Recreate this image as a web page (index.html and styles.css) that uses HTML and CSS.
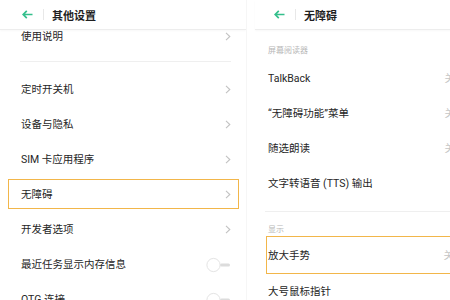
FILE: index.html
```html
<!DOCTYPE html>
<html lang="zh-CN">
    <head>
        <meta charset="UTF-8">
        <meta name="viewport" content="width=device-width, initial-scale=1.0">
        <title>其他设置 / 无障碍</title>
        <link rel="stylesheet" href="styles.css">
    </head>
    <body>
        <div class="screens">
            <section class="panel panel-left">
                <header class="bar">
                    <svg class="back" width="11" height="9" viewBox="0 0 11 9"><path d="M10.5 4.5H1.2M4.8 0.9L1.2 4.5l3.6 3.6" fill="none" stroke="#34bf8c" stroke-width="1.7"/></svg>
                    <span class="bar-sep"></span>
                    <h1 class="bar-title">其他设置</h1>
                </header>
                <div class="row row-cut">
                    <span>使用说明</span>
                    <svg class="chev" width="6" height="9" viewBox="0 0 6 9"><path d="M1 0.8l3.8 3.7L1 8.2" fill="none" stroke="#c2c2c2" stroke-width="1.1"/></svg>
                </div>
                <div class="divider"></div>
                <div class="row">
                    <span>定时开关机</span>
                    <svg class="chev" width="6" height="9" viewBox="0 0 6 9"><path d="M1 0.8l3.8 3.7L1 8.2" fill="none" stroke="#c2c2c2" stroke-width="1.1"/></svg>
                </div>
                <div class="row">
                    <span>设备与隐私</span>
                    <svg class="chev" width="6" height="9" viewBox="0 0 6 9"><path d="M1 0.8l3.8 3.7L1 8.2" fill="none" stroke="#c2c2c2" stroke-width="1.1"/></svg>
                </div>
                <div class="row">
                    <span>SIM 卡应用程序</span>
                    <svg class="chev" width="6" height="9" viewBox="0 0 6 9"><path d="M1 0.8l3.8 3.7L1 8.2" fill="none" stroke="#c2c2c2" stroke-width="1.1"/></svg>
                </div>
                <div class="row row-focus">
                    <span>无障碍</span>
                    <svg class="chev" width="6" height="9" viewBox="0 0 6 9"><path d="M1 0.8l3.8 3.7L1 8.2" fill="none" stroke="#c2c2c2" stroke-width="1.1"/></svg>
                </div>
                <div class="row">
                    <span>开发者选项</span>
                    <svg class="chev" width="6" height="9" viewBox="0 0 6 9"><path d="M1 0.8l3.8 3.7L1 8.2" fill="none" stroke="#c2c2c2" stroke-width="1.1"/></svg>
                </div>
                <div class="row">
                    <span>最近任务显示内存信息</span>
                    <svg class="toggle" width="27" height="16" viewBox="0 0 27 16"><rect x="14" y="6.5" width="10" height="3" rx="1.5" fill="#dcdcdc"/><circle cx="7.5" cy="8" r="6.6" fill="#fff" stroke="#e4e4e4" stroke-width="1"/></svg>
                </div>
                <div class="row">
                    <span>OTG 连接</span>
                    <svg class="toggle" width="27" height="16" viewBox="0 0 27 16"><rect x="14" y="6.5" width="10" height="3" rx="1.5" fill="#dcdcdc"/><circle cx="7.5" cy="8" r="6.6" fill="#fff" stroke="#e4e4e4" stroke-width="1"/></svg>
                </div>
            </section>

            <section class="panel panel-right">
                <header class="bar">
                    <svg class="back" width="11" height="9" viewBox="0 0 11 9"><path d="M10.5 4.5H1.2M4.8 0.9L1.2 4.5l3.6 3.6" fill="none" stroke="#34bf8c" stroke-width="1.7"/></svg>
                    <span class="bar-sep"></span>
                    <h1 class="bar-title">无障碍</h1>
                </header>
                <div class="group-label">屏幕阅读器</div>
                <div class="row">
                    <span>TalkBack</span>
                    <span class="value">关</span>
                </div>
                <div class="row">
                    <span>“无障碍功能”菜单</span>
                    <span class="value">关</span>
                </div>
                <div class="row">
                    <span>随选朗读</span>
                    <span class="value">关</span>
                </div>
                <div class="row">
                    <span>文字转语音 (TTS) 输出</span>
                </div>
                <div class="divider"></div>
                <div class="group-label group-label-short">显示</div>
                <div class="row row-box">
                    <span>放大手势</span>
                    <span class="value">关</span>
                </div>
                <div class="row">
                    <span>大号鼠标指针</span>
                </div>
            </section>
        </div>
    </body>
</html>
```

FILE: styles.css
```css
* {
    margin: 0;
    padding: 0;
    box-sizing: border-box;
}
body {
    width: 450px;
    height: 300px;
    overflow: hidden;
    background: #fff;
    color: #262626;
    font-family: Roboto, "Noto Sans CJK SC", sans-serif;
    font-size: 10.5px;
}
.screens {
    display: flex;
    gap: 6px;
}
.panel {
    flex-shrink: 0;
    height: 300px;
    overflow: hidden;
}
.panel-left {
    width: 247px;
    border-right: 1px solid #f6f6f6;
}
.panel-right {
    width: 212px;
}

/* title bar */
.bar {
    height: 30px;
    display: flex;
    align-items: center;
    padding-left: 22px;
    border-bottom: 1px solid #ededed;
    box-shadow: 0 1px 2px rgba(0, 0, 0, 0.03);
}
.panel-right .bar {
    padding-left: 19px;
    margin-left: 2px;
}
.back {
    display: block;
}
.bar-sep {
    width: 1px;
    height: 11px;
    background: #e8e8e8;
    margin: 0 8px 0 10px;
}
.bar-title {
    font-size: 11px;
    font-weight: 600;
    color: #1f1f1f;
}

/* rows */
.row {
    height: 35px;
    display: flex;
    align-items: center;
    justify-content: space-between;
    padding: 0 15px 0 21px;
    line-height: 13px;
}
.panel-right .row {
    padding: 0 10px 0 15px;
}
.row-cut {
    height: 23px;
    align-items: flex-start;
}
.row-cut .chev {
    margin-top: 2px;
}
.chev, .toggle {
    display: block;
}
.toggle {
    margin-right: -2px;
}
.value {
    color: #c6c6c6;
}
.row-focus {
    position: relative;
}
.row-focus::after {
    content: "";
    position: absolute;
    top: 2px;
    bottom: 3px;
    left: 8px;
    right: 7px;
    border: 1.5px solid #f2b64a;
}
.panel-right .row-box {
    height: 38px;
    margin-left: 13px;
    padding-left: 1px;
    border: 1.5px solid #f2b64a;
}

.divider {
    height: 9px;
    margin: 0 15px 10px 20px;
    border-bottom: 1px solid #efefef;
}
.panel-right .divider {
    margin: 0 0 0 12px;
    height: 11px;
}
.group-label {
    height: 31px;
    display: flex;
    align-items: flex-end;
    padding: 0 0 5px 15px;
    font-size: 8px;
    line-height: 10px;
    color: #b8b8b8;
}
.group-label-short {
    height: 24px;
    padding-bottom: 1px;
}
```
